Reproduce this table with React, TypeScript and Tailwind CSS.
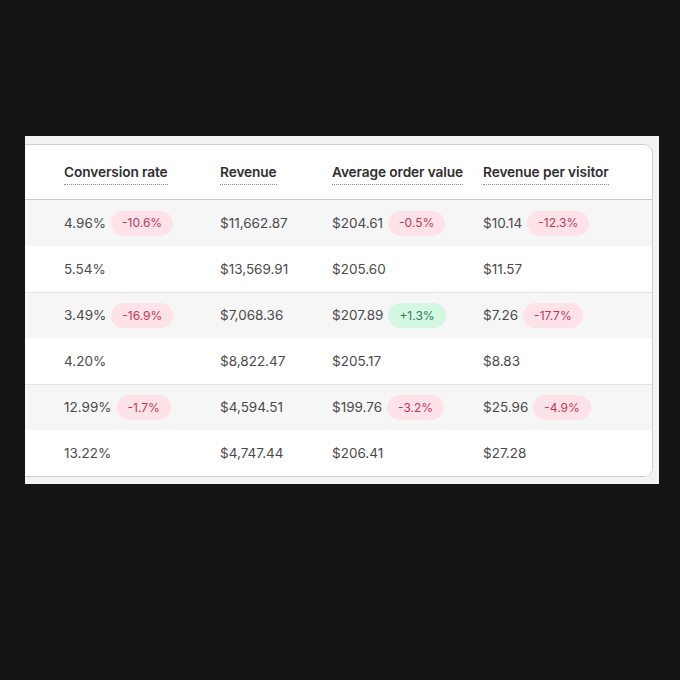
import React from "react";

type Cell = { v: string; d?: string; up?: boolean };

const rows: Cell[][] = [
  [{ v: "4.96%", d: "-10.6%" }, { v: "$11,662.87" }, { v: "$204.61", d: "-0.5%" }, { v: "$10.14", d: "-12.3%" }],
  [{ v: "5.54%" }, { v: "$13,569.91" }, { v: "$205.60" }, { v: "$11.57" }],
  [{ v: "3.49%", d: "-16.9%" }, { v: "$7,068.36" }, { v: "$207.89", d: "+1.3%", up: true }, { v: "$7.26", d: "-17.7%" }],
  [{ v: "4.20%" }, { v: "$8,822.47" }, { v: "$205.17" }, { v: "$8.83" }],
  [{ v: "12.99%", d: "-1.7%" }, { v: "$4,594.51" }, { v: "$199.76", d: "-3.2%" }, { v: "$25.96", d: "-4.9%" }],
  [{ v: "13.22%" }, { v: "$4,747.44" }, { v: "$206.41" }, { v: "$27.28" }],
];

const headers = ["Conversion rate", "Revenue", "Average order value", "Revenue per visitor"];

const grid = "grid grid-cols-[156px_112px_151px_1fr] pl-[39px] items-center";

export default function App() {
  return (
    <div
      className="w-[680px] h-[680px] bg-[#141414] pt-[136px] pl-[25px]"
      style={{ fontFamily: "Inter, 'Noto Sans', sans-serif" }}
    >
      <div className="w-[634px] h-[348px] bg-[#f3f3f3] pt-[8px] pr-[6px] overflow-hidden">
        <div className="bg-white border border-l-0 border-[#cfcfcf] rounded-r-[9px] overflow-hidden">
          <div className={`${grid} h-[55px] border-b border-[#c9c9c9]`}>
            {headers.map((h) => (
              <div key={h}>
                <span className="inline-block text-[13.7px] font-semibold text-[#2f2f2f] leading-[18px] pb-[3px] border-b border-dotted border-[#8a8a8a] tracking-[-0.1px]">
                  {h}
                </span>
              </div>
            ))}
          </div>
          {rows.map((r, i) => (
            <div
              key={i}
              className={`${grid} h-[46px] ${i % 2 === 0 ? "bg-[#f6f6f6]" : "bg-white"} ${
                i > 0 && i % 2 === 0 ? "border-t border-[#e4e4e4]" : ""
              }`}
            >
              {r.map((c, j) => (
                <div key={j} className="flex items-center gap-[5px]">
                  <span className="text-[13.5px] text-[#4a4a4a] leading-[18px] -mt-[1px]">{c.v}</span>
                  {c.d && (
                    <span
                      className={`h-[25px] px-[11px] rounded-full text-[12px] flex items-center ${
                        c.up ? "bg-[#d4f7e2] text-[#2f7d55]" : "bg-[#fde3e7] text-[#c3335b]"
                      }`}
                    >
                      {c.d}
                    </span>
                  )}
                </div>
              ))}
            </div>
          ))}
        </div>
      </div>
    </div>
  );
}
